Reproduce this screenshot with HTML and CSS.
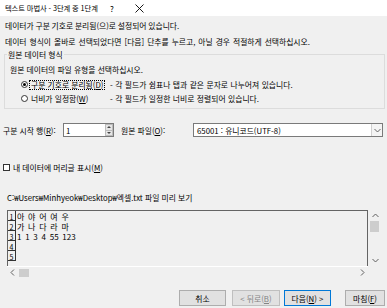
FILE: index.html
```html
<!DOCTYPE html>
<html lang="ko">
<head>
  <meta charset="UTF-8" />
  <title>텍스트 마법사</title>
  <link rel="stylesheet" href="styles.css">
</head>
<body>

<div class="titlebar">
  <span class="title">텍스트 마법사 - 3단계 중 1단계</span>
  <span class="tb-btn">?</span>
  <span class="tb-btn">
    <svg width="9" height="9" viewBox="0 0 9 9"><path d="M0.5 0.5 L8.5 8.5 M8.5 0.5 L0.5 8.5" stroke="#000" stroke-width="0.9" fill="none"/></svg>
  </span>
</div>

<div class="content">
  <p class="intro first">데이터가 구분 기호로 분리됨(으)로 설정되어 있습니다.</p>
  <p class="intro second">데이터 형식이 올바로 선택되었다면 [다음] 단추를 누르고, 아닐 경우 적절하게 선택하십시오.</p>

  <fieldset class="group">
    <legend>원본 데이터 형식</legend>
    <p class="group-text">원본 데이터의 파일 유형을 선택하십시오.</p>
    <div class="option">
      <span class="radio checked"></span>
      <span class="opt-label"><span class="focus">구분 기호로 분리됨(<u>D</u>)</span></span>
      <span class="opt-desc">- 각 필드가 쉼표나 탭과 같은 문자로 나누어져 있습니다.</span>
    </div>
    <div class="option">
      <span class="radio"></span>
      <span class="opt-label"><span class="plain">너비가 일정함(<u>W</u>)</span></span>
      <span class="opt-desc">- 각 필드가 일정한 너비로 정렬되어 있습니다.</span>
    </div>
  </fieldset>

  <div class="start-row">
    <span class="start-label">구분 시작 행(<u>R</u>):</span>
    <div class="spin">
      <span class="spin-value">1</span>
      <div class="spin-btns">
        <span class="spin-up"></span>
        <span class="spin-down"></span>
      </div>
    </div>
    <span class="origin-label">원본 파일(<u>O</u>):</span>
    <div class="select">
      <span class="select-value">65001 : 유니코드(UTF-8)</span>
      <span class="select-btn">
        <svg width="7" height="5" viewBox="0 0 7 5"><path d="M0.5 1 L3.5 4 L6.5 1" stroke="#555" stroke-width="0.9" fill="none"/></svg>
      </span>
    </div>
  </div>

  <div class="check-row">
    <span class="checkbox"></span>
    <span class="check-label">내 데이터에 머리글 표시(<u>M</u>)</span>
  </div>

  <div class="preview-label">C:₩Users₩Minhyeok₩Desktop₩엑셀.txt 파일 미리 보기</div>

  <div class="preview">
    <div class="preview-main">
      <div class="grid">
        <div class="row"><span class="num">1</span><span class="data">아 야 어 여 우</span></div>
        <div class="row"><span class="num">2</span><span class="data">가 나 다 라 마</span></div>
        <div class="row"><span class="num">3</span><span class="data">1 1 3 4 55 123</span></div>
        <div class="row"><span class="num">4</span><span class="data"></span></div>
        <div class="row"><span class="num">5</span><span class="data"></span></div>
      </div>
      <div class="vscroll">
        <span class="arrow">
          <svg width="7" height="5" viewBox="0 0 7 5"><path d="M0.5 4 L3.5 1 L6.5 4" stroke="#606060" stroke-width="1" fill="none"/></svg>
        </span>
        <span class="vthumb"></span>
        <span class="spacer"></span>
        <span class="arrow">
          <svg width="7" height="5" viewBox="0 0 7 5"><path d="M0.5 1 L3.5 4 L6.5 1" stroke="#606060" stroke-width="1" fill="none"/></svg>
        </span>
      </div>
    </div>
    <div class="hscroll">
      <span class="harrow">
        <svg width="5" height="7" viewBox="0 0 5 7"><path d="M4 0.5 L1 3.5 L4 6.5" stroke="#606060" stroke-width="1" fill="none"/></svg>
      </span>
      <span class="hthumb"></span>
      <span class="spacer"></span>
      <span class="harrow">
        <svg width="5" height="7" viewBox="0 0 5 7"><path d="M1 0.5 L4 3.5 L1 6.5" stroke="#606060" stroke-width="1" fill="none"/></svg>
      </span>
    </div>
  </div>

  <div class="buttons">
    <button class="btn cancel">취소</button>
    <button class="btn back" disabled>&lt; 뒤로(<u>B</u>)</button>
    <button class="btn next">다음(<u>N</u>) &gt;</button>
    <button class="btn finish">마침(<u>F</u>)</button>
  </div>
</div>

</body>
</html>
```

FILE: styles.css
```css
body {
  margin: 0;
  width: 387px;
  height: 308px;
  overflow: hidden;
  background: #f0f0f0;
  font-family: "Noto Sans CJK KR", "Noto Sans", sans-serif;
  font-size: 7.8px;
  color: #000;
}

u {
  text-underline-offset: 1px;
}

.titlebar {
  height: 16px;
  background: #fff;
  display: flex;
  align-items: center;
  padding-left: 5px;
}

.title {
  font-size: 7.3px;
  letter-spacing: -0.1px;
}

.tb-btn {
  width: 28px;
  height: 16px;
  display: flex;
  align-items: center;
  justify-content: center;
  font-size: 8px;
}

.tb-btn:first-of-type {
  margin-left: auto;
}

.content {
  padding: 2px 2px 0 4px;
}

.intro {
  margin: 0 0 0 1px;
  line-height: 16px;
}

.intro.first {
  word-spacing: -0.4px;
}

.intro.second {
  word-spacing: 0.8px;
}

.group {
  margin: 0;
  padding: 0 0 3px 2px;
  border: 1px solid #dcdcdc;
}

.group legend {
  padding: 0 1px;
  line-height: 9px;
}

.group-text {
  margin: 4px 0 0 3px;
  line-height: 14px;
}

.option {
  display: flex;
  align-items: center;
  height: 14px;
}

.radio {
  width: 7px;
  height: 7px;
  margin-left: 14px;
  border: 1px solid #333;
  border-radius: 50%;
  background: #fff;
  box-sizing: border-box;
  display: flex;
  align-items: center;
  justify-content: center;
}

.radio.checked::after {
  content: "";
  width: 3px;
  height: 3px;
  border-radius: 50%;
  background: #000;
}

.opt-label {
  width: 82px;
  padding-left: 1px;
  box-sizing: border-box;
  white-space: nowrap;
}

.opt-label .focus {
  display: inline-block;
  line-height: 8px;
  padding: 0 1px;
  border: 1px dotted #000;
}

.opt-label .plain {
  display: inline-block;
  line-height: 8px;
  padding: 0 2px;
}

.opt-desc {
  word-spacing: 0.3px;
}

.start-row {
  display: flex;
  align-items: center;
  height: 14px;
  margin-top: 14px;
}

.start-label {
  width: 60px;
  margin-left: -1px;
  white-space: nowrap;
}

.spin {
  width: 51px;
  height: 14px;
  box-sizing: border-box;
  border: 1px solid #7a7a7a;
  background: #fff;
  display: flex;
  align-items: center;
}

.spin-value {
  flex: 1;
  padding-left: 2px;
}

.spin-btns {
  width: 8px;
  height: 12px;
  display: flex;
  flex-direction: column;
}

.spin-up, .spin-down {
  flex: 1;
  background: #e6e6e6;
  border: 1px solid #bcbcbc;
  display: flex;
  align-items: center;
  justify-content: center;
}

.spin-down {
  border-top: none;
}

.spin-up::after {
  content: "";
  border-left: 2px solid transparent;
  border-right: 2px solid transparent;
  border-bottom: 2px solid #444;
}

.spin-down::after {
  content: "";
  border-left: 2px solid transparent;
  border-right: 2px solid transparent;
  border-top: 2px solid #444;
}

.origin-label {
  width: 72px;
  margin-left: 7px;
  white-space: nowrap;
}

.select {
  width: 190px;
  height: 14px;
  box-sizing: border-box;
  border: 1px solid #7a7a7a;
  background: #fff;
  display: flex;
  align-items: center;
}

.select-value {
  flex: 1;
  padding-left: 3px;
}

.select-btn {
  width: 10px;
  height: 12px;
  border-left: 1px solid #d0d0d0;
  background: #f4f4f4;
  display: flex;
  align-items: center;
  justify-content: center;
}

.check-row {
  display: flex;
  align-items: center;
  height: 10px;
  margin-top: 25px;
}

.checkbox {
  width: 7px;
  height: 7px;
  margin-left: -1px;
  border: 1px solid #333;
  background: #fff;
  box-sizing: border-box;
}

.check-label {
  margin-left: 3px;
}

.preview-label {
  margin: 21px 0 0 3px;
  line-height: 10px;
}

.preview {
  margin: 7px 0 0 3px;
  width: 376px;
}

.preview-main {
  display: flex;
  height: 56px;
}

.grid {
  flex: 1;
  border: 1px solid #646464;
  border-bottom: none;
}

.row {
  display: flex;
  height: 10px;
  line-height: 10px;
}

.num {
  width: 8px;
  box-sizing: border-box;
  border-right: 1px solid #333;
  border-bottom: 1px solid #333;
  text-align: center;
  font-size: 7px;
  line-height: 10px;
  padding-top: 1px;
}

.data {
  padding: 1px 0 0 1px;
  font-size: 8px;
  word-spacing: 1.5px;
}

.vscroll {
  width: 15px;
  display: flex;
  flex-direction: column;
}

.vscroll .arrow {
  height: 11px;
  display: flex;
  align-items: center;
  justify-content: center;
}

.vthumb {
  width: 9px;
  height: 11px;
  margin-left: 2px;
  background: #cdcdcd;
}

.spacer {
  flex: 1;
}

.hscroll {
  width: 361px;
  height: 12px;
  display: flex;
  align-items: center;
  border-top: 1px solid #fff;
  box-sizing: border-box;
}

.harrow {
  width: 11px;
  display: flex;
  justify-content: center;
}

.hthumb {
  width: 10px;
  height: 8px;
  margin-left: 1px;
  background: #cdcdcd;
}

.buttons {
  display: flex;
  justify-content: flex-end;
  margin-top: 12px;
}

.btn {
  height: 16px;
  padding: 0;
  border: 1px solid #adadad;
  background: #e1e1e1;
  font-family: inherit;
  font-size: 7.8px;
  color: #000;
}

.cancel {
  width: 47px;
  margin-right: 6px;
}

.back {
  width: 48px;
  margin-right: 4px;
  color: #838383;
  border-color: #bfbfbf;
}

.next {
  width: 47px;
  margin-right: 14px;
  border-color: #0078d7;
}

.finish {
  width: 40px;
}
```
